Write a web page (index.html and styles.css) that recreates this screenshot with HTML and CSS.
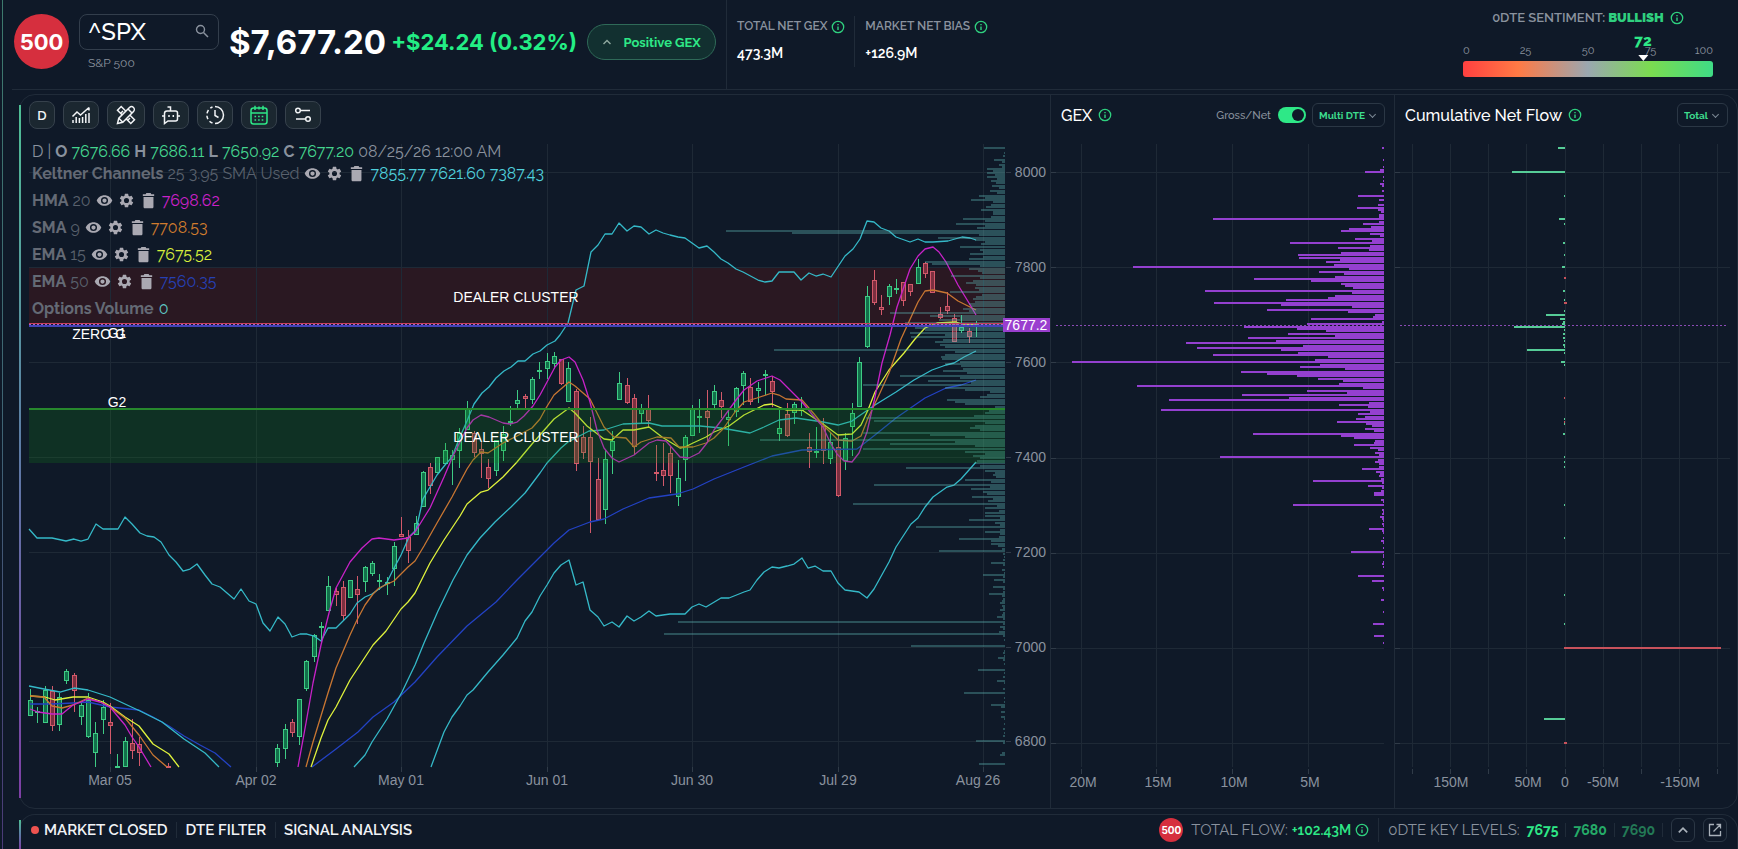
FILE: index.html
```html
<!DOCTYPE html>
<html lang="en">
<head>
  <meta charset="UTF-8">
  <meta name="viewport" content="width=device-width, initial-scale=1.0">
  <title>^SPX - S&amp;P 500</title>
  <link rel="stylesheet" href="styles.css">
</head>
<body>
  <svg class="sprite" width="0" height="0" aria-hidden="true">
    <symbol id="info" viewBox="0 0 14 14">
      <circle cx="7" cy="7" r="5.7" fill="none" stroke="currentColor" stroke-width="1.3"/>
      <path d="M7 6.4v3.5M7 4v1.3" fill="none" stroke="currentColor" stroke-width="1.4"/>
    </symbol>
    <symbol id="up" viewBox="0 0 10 10"><path d="M1.5 7 5 3.5 8.5 7" fill="none" stroke="currentColor" stroke-width="1.4"/></symbol>
    <symbol id="eye" viewBox="0 0 24 24"><path fill="currentColor" fill-rule="evenodd" d="M12 4.500C7 4.500 2.700 7.600 1 12c1.700 4.400 6 7.500 11 7.500s9.300-3.100 11-7.500c-1.700-4.400-6-7.500-11-7.500zM12 17a5 5 0 1 1 0-10 5 5 0 0 1 0 10zm0-8a3 3 0 1 0 0 6 3 3 0 0 0 0-6z"/></symbol>
    <symbol id="gear" viewBox="0 0 24 24"><path fill="currentColor" fill-rule="evenodd" d="M19.140 12.940c.04-.3.06-.61.06-.94s-.02-.64-.07-.94l2.030-1.580a.5.5 0 0 0 .12-.61l-1.920-3.320a.5.5 0 0 0-.59-.22l-2.390.96a7 7 0 0 0-1.620-.94L14.400 2.810a.5.500 0 0 0-.48-.41h-3.840a.5.5 0 0 0-.47.41L9.250 5.350c-.59.24-1.130.57-1.620.94l-2.390-.96a.5.5 0 0 0-.59.22L2.740 8.870a.5.5 0 0 0 .12.61l2.030 1.580c-.05.3-.09.63-.09.94s.02.64.07.94l-2.030 1.580a.5.5 0 0 0-.12.61l1.920 3.320c.12.22.37.29.59.22l2.390-.96c.5.38 1.030.7 1.620.94l.36 2.540c.05.24.24.41.48.41h3.840c.24 0 .44-.17.47-.41l.36-2.540c.59-.24 1.130-.56 1.620-.94l2.390.96c.22.08.47 0 .59-.22l1.920-3.320a.5.5 0 0 0-.12-.61zM12 15.600a3.600 3.600 0 1 1 0-7.200 3.600 3.600 0 0 1 0 7.200z"/></symbol>
    <symbol id="trash" viewBox="0 0 24 24"><path fill="currentColor" d="M5 21c0 1.100.9 2 2 2h10c1.100 0 2-.9 2-2V7H5zM20 3h-4l-1-1.500H9L8 3H4v2.500h16z"/></symbol>
  </svg>

  <header class="top">
    <div class="logo">500</div>
    <div class="symbol">
      <div class="search">
        <input type="text" value="^SPX" aria-label="Symbol">
        <svg width="14" height="14" viewBox="0 0 14 14"><circle cx="5.500" cy="5.500" r="4" fill="none" stroke="currentColor" stroke-width="1.400"/><path d="M8.500 8.500 13 13" stroke="currentColor" stroke-width="1.500"/></svg>
      </div>
      <p>S&amp;P 500</p>
    </div>
    <div class="price">$7,677.20</div>
    <div class="change">+$24.24 (0.32%)</div>
    <button class="pill"><svg width="10" height="10"><use href="#up"/></svg>Positive GEX</button>
    <div class="stats">
      <div class="stat">
        <h2>TOTAL NET GEX <svg class="info"><use href="#info"/></svg></h2>
        <p>473.3M</p>
      </div>
      <div class="stat">
        <h2>MARKET NET BIAS <svg class="info"><use href="#info"/></svg></h2>
        <p>+126.9M</p>
      </div>
    </div>
    <div class="sentiment">
      <h2>0DTE SENTIMENT: <b>BULLISH</b> <svg class="info"><use href="#info"/></svg></h2>
      <div class="gauge">
        <div class="scale"><span>0</span><span>25</span><span>50</span><span>75</span><span>100</span></div>
        <div class="bar"></div>
        <div class="needle" style="left: 72%">72</div>
      </div>
    </div>
  </header>

  <main class="panels">
    <section class="panel chart">
      <div class="toolbar">
        <button class="interval">D</button>
        <button aria-label="Indicators">
          <svg width="20" height="20" viewBox="0 0 20 20"><path d="M1.500 11.500 6 7l3.500 3L18 2.500M18 2.500v3M2 18v-3M5.200 18v-6M8.400 18v-5M11.600 18v-6M14.800 18V9M18 18V8"/></svg>
        </button>
        <button class="wide" aria-label="Drawing tools">
          <svg width="20" height="20" viewBox="0 0 20 20"><path d="M5.200 1.500 1.500 5.200l13.300 13.300 3.700-3.700zM5 8l2-2M8.500 11.500l1.500-1.500M12 15l2-2"/><path class="cover" d="M13.500 2.500 2.800 13.200 1.500 18.500l5.300-1.300L17.500 6.500a2.800 2.800 0 0 0-4-4z"/><path d="M12 4l4 4M2.800 13.200l4 4"/></svg>
        </button>
        <button aria-label="Assistant">
          <svg width="20" height="20" viewBox="0 0 20 20"><path d="M9.500 6V2H6.500M6 6h8.500a2 2 0 0 1 2 2v6a2 2 0 0 1-2 2H7l-3.500 2.500V8.500A2.500 2.500 0 0 1 6 6zM1 11h2.500M16.500 11H19M8 10v2M12.300 10v2"/></svg>
        </button>
        <button aria-label="History">
          <svg width="20" height="20" viewBox="0 0 20 20"><path d="M10 1.500a8.500 8.500 0 0 1 0 17M10 5v5.500l3.500 2"/><path stroke-dasharray="3.500 2.500" d="M7.500 18A8.500 8.500 0 0 1 7.500 2"/></svg>
        </button>
        <button class="on" aria-label="Calendar">
          <svg width="20" height="20" viewBox="0 0 20 20"><rect x="2" y="3" width="16" height="16" rx="2.500"/><path d="M2 8h16M6 .8V5M14 .8V5M10 1.500v3"/><path stroke-dasharray="1.600 2" d="M5.500 11.500h10M5.500 15h10"/></svg>
        </button>
        <button aria-label="Settings">
          <svg width="18" height="18" viewBox="0 0 18 18"><circle cx="4" cy="4.500" r="2.300"/><circle cx="14" cy="13" r="2.300"/><path d="M6.500 4.500H16M2 13h9.500"/></svg>
        </button>
      </div>
      <div class="plot">
        <svg id="price" viewBox="20 141 1030 667"></svg>
        <div class="legend">
          <p class="ohlc">D | <b>O</b> <i>7676.66</i> <b>H</b> <i>7686.11</i> <b>L</b> <i>7650.92</i> <b>C</b> <i>7677.20</i> 08/25/26 12:00 AM</p>
          <p class="row"><b>Keltner Channels</b> 25 3.95 SMA Used <svg><use href="#eye"/></svg><svg><use href="#gear"/></svg><svg><use href="#trash"/></svg><span class="cyan">7855.77 7621.60 7387.43</span></p>
          <p class="row"><b>HMA</b> 20 <svg><use href="#eye"/></svg><svg><use href="#gear"/></svg><svg><use href="#trash"/></svg><span class="magenta">7698.62</span></p>
          <p class="row"><b>SMA</b> 9 <svg><use href="#eye"/></svg><svg><use href="#gear"/></svg><svg><use href="#trash"/></svg><span class="orange">7708.53</span></p>
          <p class="row"><b>EMA</b> 15 <svg><use href="#eye"/></svg><svg><use href="#gear"/></svg><svg><use href="#trash"/></svg><span class="yellow">7675.52</span></p>
          <p class="row"><b>EMA</b> 50 <svg><use href="#eye"/></svg><svg><use href="#gear"/></svg><svg><use href="#trash"/></svg><span class="blue">7560.35</span></p>
          <p class="row"><b>Options Volume</b> <span class="teal">0</span></p>
        </div>
      </div>
    </section>

    <section class="panel">
      <div class="head">
        <h3>GEX</h3><svg class="info"><use href="#info"/></svg>
        <label class="switch">Gross/Net <input type="checkbox" checked></label>
        <div class="select"><select aria-label="Expiry"><option>Multi DTE</option></select></div>
      </div>
      <svg id="gex" viewBox="1051 141 343 667"></svg>
    </section>

    <section class="panel">
      <div class="head">
        <h3>Cumulative Net Flow</h3><svg class="info"><use href="#info"/></svg>
        <div class="select last"><select aria-label="Flow type"><option>Total</option></select></div>
      </div>
      <svg id="flow" viewBox="1395 141 342 667"></svg>
    </section>
  </main>

  <footer>
    <nav>
      <a href="#" class="closed">MARKET CLOSED</a>
      <a href="#">DTE FILTER</a>
      <a href="#">SIGNAL ANALYSIS</a>
    </nav>
    <div class="flow">
      <span class="logo small">500</span>
      TOTAL FLOW: <b>+102.43M</b>
      <svg class="info"><use href="#info"/></svg>
    </div>
    <div class="levels">
      0DTE KEY LEVELS: <b>7675</b><b>7680</b><b>7690</b>
    </div>
    <button aria-label="Expand"><svg width="12" height="12"><use href="#up"/></svg></button>
    <button aria-label="Open in new window"><svg width="14" height="14" viewBox="0 0 14 14" fill="none" stroke="currentColor" stroke-width="1.300"><path d="M6 1.500H1.500v11h11V8M8.500 1.500h4v4M12.500 1.500 5.500 8.500"/></svg></button>
  </footer>

  <script src="chart.js"></script>
</body>
</html>
```
FILE: styles.css
```css
* {
  margin: 0;
  padding: 0;
  box-sizing: border-box;
}

html, body {
  height: 100%;
}

body {
  display: flex;
  flex-direction: column;
  position: relative;
  overflow: hidden;
  background-color: #0f1928;
  color: #8a929e;
  font-family: Raleway, Lato, sans-serif;
}

body::before {
  content: '';
  position: absolute;
  top: 0;
  bottom: 0;
  left: 2px;
  width: 1px;
  background: linear-gradient(#3d7a6d, #3f6474 50%, #4b3a78);
}

button, input, select {
  font-family: inherit;
  color: inherit;
  background: none;
  border: none;
  outline: none;
}

button {
  display: flex;
  align-items: center;
  justify-content: center;
  cursor: pointer;
}

svg {
  flex: none;
}

.sprite {
  position: absolute;
}

.info {
  width: 14px;
  height: 14px;
  color: #2fd07f;
}

.top {
  display: flex;
  align-items: flex-start;
  height: 90px;
  margin-left: 12px;
  border-bottom: 1px solid #202b39;
}

.logo {
  display: flex;
  align-items: center;
  justify-content: center;
  width: 55px;
  height: 55px;
  margin: 14px 10px 0 2px;
  border-radius: 50%;
  background-color: #d62f3e;
  color: #fff;
  font-family: Inter, sans-serif;
  font-size: 22px;
  font-weight: 700;
}

.symbol {
  width: 140px;
  margin: 14px 10px 0 0;
}

.search {
  display: flex;
  align-items: center;
  height: 36px;
  padding: 0 9px 2px 8px;
  border: 1px solid #333e4c;
  border-radius: 8px;
}

.search input {
  flex: 1;
  width: 50px;
  color: #fff;
  font-size: 24px;
  font-weight: 500;
}

.symbol p {
  padding-left: 9px;
  font-size: 12px;
  line-height: 26px;
}

.price {
  color: #fff;
  font-family: Inter, sans-serif;
  font-size: 33px;
  font-weight: 700;
  line-height: 84px;
}

.change {
  margin-left: 5px;
  color: #23ee85;
  font-family: Inter, sans-serif;
  font-size: 22px;
  font-weight: 700;
  line-height: 84px;
}

.pill {
  width: 129px;
  height: 36px;
  margin: 24px 10px 0;
  gap: 11px;
  border: 1px solid #2f6a58;
  border-radius: 18px;
  background-color: #123030;
  color: #2ee887;
  font-size: 13px;
  font-weight: 700;
}

.pill svg {
  color: #8fa89f;
}

.stats {
  display: flex;
  height: 89px;
  padding: 16px 0 22px;
  border-left: 1px solid #202b39;
}

.stat {
  padding: 0 9px 0 10px;
}

.stat + .stat {
  border-left: 1px solid #202b39;
}

.stat h2 {
  display: flex;
  align-items: center;
  gap: 4px;
  font-size: 12px;
  font-weight: 600;
  line-height: 21px;
}

.stat p {
  margin-top: 5px;
  color: #fff;
  font-size: 14px;
  font-weight: 600;
  line-height: 22px;
}

.sentiment {
  width: 250px;
  margin: 8px 25px 0 auto;
}

.sentiment h2 {
  display: flex;
  align-items: center;
  justify-content: center;
  gap: 3px;
  font-size: 13px;
  font-weight: 600;
  line-height: 20px;
}

.sentiment b {
  color: #2fd07f;
}

.sentiment .info {
  margin-left: 3px;
}

.gauge {
  position: relative;
}

.scale {
  display: flex;
  justify-content: space-between;
  padding: 13px 0 1px;
  font-size: 11px;
  line-height: 19px;
}

.scale span {
  display: flex;
  justify-content: center;
  width: 0;
}

.scale span:first-child {
  justify-content: flex-start;
}

.scale span:last-child {
  justify-content: flex-end;
}

.bar {
  height: 16px;
  border-radius: 3px;
  background: linear-gradient(90deg, #ff4040, #ff7a45 22%, #9aa7b0 50%, #7bdc50 75%, #3fdc86);
}

.needle {
  position: absolute;
  top: 4px;
  transform: translateX(-50%);
  color: #2ee887;
  font-size: 15px;
  font-weight: 800;
  line-height: 18px;
}

.needle::after {
  content: '';
  position: absolute;
  top: 23px;
  left: 50%;
  margin-left: -5px;
  border: 5px solid transparent;
  border-top: 6px solid #fff;
  border-bottom: none;
}

.panels {
  display: grid;
  grid-template-columns: 1030fr 344fr 343fr;
  position: relative;
  margin: 4px 0 5px 19px;
  border: 1px solid #202b39;
  border-radius: 16px;
}

.panels::before, footer::before {
  content: '';
  position: absolute;
  top: 10px;
  bottom: 10px;
  left: -1px;
  width: 2px;
  background: linear-gradient(#4fbf95, #5d7ba6 50%, #7e3fa5);
}

.panel + .panel {
  border-left: 1px solid #202b39;
}

.panel > svg, .plot > svg {
  display: block;
  width: 100%;
}

.toolbar {
  display: flex;
  gap: 8px;
  height: 46px;
  padding: 6px 9px;
}

.toolbar button {
  width: 36px;
  height: 28px;
  border: 1px solid #36414c;
  border-radius: 8px;
  background-color: #1b2730;
  color: #f2f4f6;
}

.toolbar .interval {
  width: 26px;
  font-size: 13px;
  font-weight: 600;
}

.toolbar .wide {
  width: 38px;
}

.toolbar .on {
  color: #2ee887;
}

.toolbar svg {
  fill: none;
  stroke: currentColor;
  stroke-width: 1.5px;
}

.toolbar .cover {
  fill: #1b2730;
}

.plot {
  position: relative;
}

.legend {
  position: absolute;
  top: 0;
  left: 12px;
  font-size: 16px;
  white-space: nowrap;
}

.ohlc {
  padding-top: 2px;
  line-height: 17px;
}

.ohlc i {
  color: #45d58f;
  font-style: normal;
}

.row {
  display: flex;
  align-items: center;
  gap: 4px;
  height: 27px;
  color: #59616d;
}

.row b {
  color: #646a75;
}

.row svg {
  width: 17px;
  height: 17px;
  margin-left: 1px;
  color: #aaa9b2;
}

.row span {
  margin-left: 1px;
}

.cyan { color: #4fd0dc; }
.magenta { color: #cb21c9; }
.orange { color: #d07c2e; }
.yellow { color: #d8ef3c; }
.blue { color: #2640b4; }
.teal { color: #5ec6c2; }

.head {
  display: flex;
  align-items: center;
  height: 46px;
  padding: 0 9px 6px 10px;
  gap: 6px;
}

.head h3 {
  color: #fff;
  font-size: 16px;
  font-weight: 500;
}

.switch {
  display: flex;
  align-items: center;
  gap: 7px;
  margin-left: auto;
  font-size: 11px;
  font-weight: 500;
}

.switch input {
  appearance: none;
  position: relative;
  width: 28px;
  height: 16px;
  border-radius: 8px;
  background-color: #2ee887;
  cursor: pointer;
}

.switch input::after {
  content: '';
  position: absolute;
  top: 2px;
  right: 2px;
  width: 12px;
  height: 12px;
  border-radius: 50%;
  background-color: #0f1928;
}

.select {
  position: relative;
  width: 73px;
}

.select::after {
  content: '';
  position: absolute;
  top: 9px;
  right: 10px;
  width: 4px;
  height: 4px;
  border: solid #7c8894;
  border-width: 0 1px 1px 0;
  transform: rotate(45deg);
  pointer-events: none;
}

.select select {
  appearance: none;
  display: block;
  width: 100%;
  height: 24px;
  padding: 0 6px;
  border: 1px solid #2b3745;
  border-radius: 6px;
  color: #3ddc8d;
  font-size: 10px;
  font-weight: 700;
}

.select.last {
  width: 51px;
  margin-left: auto;
}

footer {
  display: flex;
  align-items: flex-start;
  flex: 1;
  position: relative;
  min-height: 35px;
  margin-left: 19px;
  padding: 3px 10px 0 11px;
  border: 1px solid #202b39;
  border-bottom: none;
  border-radius: 16px 16px 0 0;
  font-size: 15px;
  line-height: 22px;
}

footer::before {
  top: 5px;
  bottom: 0;
}

nav, .flow, .levels {
  display: flex;
  align-items: center;
  height: 24px;
}

nav a {
  padding: 0 9px 0 8px;
  border-left: 1px solid #202b39;
  color: #f1f3f6;
  font-weight: 600;
  line-height: 16px;
  text-decoration: none;
}

nav .closed {
  display: flex;
  align-items: center;
  gap: 5px;
  padding-left: 0;
  border: none;
}

.closed::before {
  content: '';
  width: 8px;
  height: 8px;
  border-radius: 50%;
  background-color: #ef5350;
}

.flow {
  gap: 4px;
  margin-left: auto;
}

.logo.small {
  width: 24px;
  height: 24px;
  margin: 0 4px 0 0;
  font-size: 10px;
}

.flow b {
  color: #2ee887;
  font-size: 14px;
  font-weight: 600;
}

.levels {
  margin-left: 9px;
  padding-left: 9px;
  border-left: 1px solid #202b39;
}

.levels b {
  padding: 0 7px;
  border-right: 1px solid #202b39;
  color: #2ee887;
  font-size: 14px;
  line-height: 14px;
}

.levels b + b {
  color: #25ab68;
}

.levels b + b + b {
  color: #237a56;
}

footer button {
  width: 24px;
  height: 24px;
  margin-left: 8px;
  border: 1px solid #2b3745;
  border-radius: 6px;
  color: #a9b1ba;
}

/* charts */
.grid { stroke: #1e2936; }
.tick { stroke: #303b48; }
.axis { fill: #8a929e; }
.note { fill: #fff; }
.axis, .note, .tag-text {
  font-family: "Liberation Sans", Arial, sans-serif;
  font-size: 14px;
}
.tag { fill: #9a3fcf; }
.tag-text { fill: #fff; }
.bars-vol { fill: #5fb3b3; fill-opacity: .36; }
.bars-gex { fill: #9440d0; }
.bars-up { fill: #56cc97; }
.bars-down { fill: #c8525c; }
.zone-red { fill: #2a1822; }
.zone-green { fill: #109016; fill-opacity: .2; }
.line { fill: none; stroke-width: 1.3px; stroke-linejoin: round; }
.up { fill: #12704b; stroke: #3ecb84; }
.down { fill: #7c2f40; stroke: #d2596a; }
```
FILE: chart.js
```js
const NS = 'http://www.w3.org/2000/svg'

function add(svg, tag, attrs, text) {
  const el = document.createElementNS(NS, tag)
  for (const key in attrs) el.setAttribute(key, attrs[key])
  if (text !== undefined) el.textContent = text
  svg.appendChild(el)
  return el
}

function line(svg, x1, y1, x2, y2, attrs) {
  add(svg, 'line', { x1, y1, x2, y2, 'shape-rendering': 'crispEdges', ...attrs })
}

function label(svg, x, y, text, cls = 'axis', anchor = 'middle') {
  add(svg, 'text', { x, y, class: cls, 'text-anchor': anchor }, text)
}

// list is "y:length" pairs, dir -1 grows to the left of x
function bars(svg, x, list, dir, cls) {
  list.trim().split(/\s+/).forEach(item => {
    const [y, len] = item.split(':').map(Number)
    add(svg, 'rect', { x: dir < 0 ? x - len : x, y: y - 1, width: len, height: 2, class: cls, 'shape-rendering': 'crispEdges' })
  })
}

function curve(svg, points, color) {
  add(svg, 'polyline', { points, class: 'line', stroke: color })
}

const LEVELS = [8000, 7800, 7600, 7400, 7200, 7000, 6800]

/* price chart */
const price = document.getElementById('price')
const months = [[110, 'Mar 05'], [256, 'Apr 02'], [401, 'May 01'], [547, 'Jun 01'], [692, 'Jun 30'], [838, 'Jul 29'], [983, 'Aug 26']]

add(price, 'rect', { x: 29, y: 267, width: 976, height: 56, class: 'zone-red' })

months.forEach(([x, text]) => {
  line(price, x, 144, x, 767, { class: 'grid' })
  line(price, x, 767, x, 772, { class: 'tick' })
  label(price, Math.min(x, 978), 785, text)
})
LEVELS.forEach((level, i) => {
  const y = Math.round(172 + i * 94.9)
  line(price, 29, y, 1005, y, { class: 'grid' })
  line(price, 1006, y, 1011, y, { class: 'tick' })
  label(price, 1046, y + 5, level, 'axis', 'end')
})

// i, body top, body bottom, high, low, up
const candles = [
  [0,700,716,689,716,1],[1,711,713,707,723,1],[2,690,723,686,723,1],[3,691,726,686,731,0],[4,697,725,693,731,1],
  [5,671,681,669,684,1],[6,675,691,673,712,0],[7,705,717,703,725,1],[8,700,737,693,738,1],[9,733,753,722,767,1],
  [10,707,720,700,734,1],[11,722,726,703,754,0],[12,766,767,754,767,1],[13,741,767,737,767,1],[14,743,751,719,759,0],
  [15,744,753,737,766,0],[19,766,767,763,767,0],
  [34,748,763,744,767,1],[35,729,749,724,759,1],[36,722,733,719,737,0],[37,699,737,699,745,1],[38,661,689,660,691,1],
  [39,635,657,634,662,1],[40,626,628,622,642,1],[41,586,611,576,611,1],[42,591,595,588,606,0],[43,587,616,581,621,0],
  [44,580,598,580,598,1],[45,589,595,576,624,0],[46,567,582,566,592,1],[47,563,574,561,576,1],[48,580,582,574,590,1],
  [49,582,584,577,595,1],[50,546,569,542,586,1],[51,534,537,517,537,0],[52,537,551,530,563,0],[53,523,535,516,535,1],
  [54,472,507,471,507,1],[55,467,486,463,494,0],[56,457,473,457,473,1],[57,450,464,443,464,1],[58,455,460,450,485,1],
  [59,433,451,428,468,1],[60,409,430,401,430,1],[61,433,453,431,457,0],[62,449,454,442,478,0],[63,467,479,459,488,0],
  [64,440,471,440,476,1],[65,434,451,426,461,1],[66,421,423,406,426,1],[67,400,404,390,408,1],[68,396,399,394,408,0],
  [69,379,400,377,404,1],[70,370,371,362,379,1],[71,361,369,353,379,1],[72,356,364,352,369,1],[73,359,384,359,385,0],
  [74,368,402,362,402,1],[75,391,464,389,471,0],[76,437,453,426,459,0],[77,437,462,417,533,0],[78,479,520,458,520,0],
  [79,459,510,450,524,1],[80,441,451,431,474,1],[81,383,400,372,400,1],[82,385,403,378,404,0],[83,398,447,394,455,0],
  [84,409,414,404,424,1],[85,408,421,395,428,0],[86,472,473,445,481,0],[87,470,476,443,486,0],[88,453,476,447,493,0],
  [89,478,497,460,506,1],[90,437,460,435,481,1],[91,409,436,405,436,1],[92,416,418,399,433,1],[93,411,418,390,443,0],
  [94,391,405,385,408,1],[95,400,407,392,418,0],[96,417,420,410,446,1],[97,388,412,387,417,1],[98,373,386,371,405,1],
  [99,387,402,378,405,0],[100,388,391,382,403,1],[101,374,375,370,395,1],[102,381,392,376,407,0],[103,428,434,409,441,1],
  [104,414,436,403,437,0],[105,404,413,402,424,1],[106,409,410,397,416,1],[107,447,452,433,468,0],[108,451,453,427,458,1],
  [109,426,451,418,464,0],[110,442,459,433,464,1],[111,447,496,434,497,0],[112,438,461,433,470,1],[113,413,427,403,456,1],
  [114,362,407,357,407,1],[115,296,347,286,348,1],[116,280,303,270,305,0],[117,307,310,295,315,0],[118,286,297,284,305,1],
  [119,288,290,279,294,1],[120,282,301,282,306,0],[121,284,292,284,296,0],[122,267,284,259,284,1],[123,263,274,262,278,0],
  [124,271,293,271,293,0],[125,314,318,307,319,0],[126,306,311,292,314,0],[127,318,342,314,342,0],[128,327,331,315,333,1],
  [129,331,337,328,343,0],[130,325,326,321,337,1]
]
candles.forEach(([i, top, bottom, high, low, up]) => {
  const x = Math.round(30 + i * 7.276)
  const cls = up ? 'up' : 'down'
  line(price, x + .5, high, x + .5, low, { class: cls })
  add(price, 'rect', { x: x - 1.5, y: top + .5, width: 4, height: Math.max(bottom - top - 1, 1), class: cls })
})

curve(price, '30,704 52,704 73,703 88,702 110,707 139,710 153,717 169,726 184,736 200,745 215,753 231,767', '#2342c4')
curve(price, '312,767 336,749 358,732 373,717 394,702 415,682 437,657 467,626 496,602 517,580 540,557 554,543 569,530 590,522 604,519 623,509 649,498 677,494 693,489 714,479 744,467 772,456 802,450 857,449 875,435 896,418 925,398 946,388 961,385 976,380', '#2342c4')
curve(price, '29,529 37,538 52,538 66,541 74,539 81,541 88,539 96,524 103,529 118,529 125,517 132,524 140,533 147,536 154,537 161,542 169,555 176,562 183,571 190,569 197,564 205,575 212,584 220,587 227,593 234,599 241,589 249,601 256,604 263,623 270,631 278,617 285,624 292,637 300,634 307,634 314,636 321,641 328,628 336,628 343,621 350,614 357,603 365,597 372,594 379,589 386,584 393,570 401,555 409,537 416,530 423,499 430,487 437,475 445,465 452,457 459,439 467,421 474,404 482,393 489,387 496,378 504,371 511,367 518,361 525,361 533,354 540,351 547,345 555,341 560,335 568,323 576,290 584,286 591,252 598,245 605,234 612,234 619,223 627,231 634,226 641,227 649,234 656,230 663,233 670,235 678,237 685,238 692,243 699,248 707,246 714,252 721,259 728,263 736,269 743,272 758,280 765,282 772,281 779,272 794,272 801,280 809,273 816,276 823,274 831,277 845,256 853,249 860,239 867,221 874,222 881,228 889,231 896,237 910,242 918,239 925,242 933,242 948,241 962,237 970,238 976,240', '#35b9c8')
curve(price, '29,686 44,689 60,692 74,688 88,690 110,697 140,711 162,722 184,739 205,753 219,767', '#35b9c8')
curve(price, '354,767 365,755 372,742 387,719 402,692 415,665 424,643 438,611 453,580 467,555 480,538 495,522 511,507 525,493 540,473 547,463 561,448 568,442 589,431 604,430 623,424 649,423 662,426 700,426 721,428 750,433 764,427 779,420 796,418 823,422 838,425 852,421 859,416 875,405 896,392 914,380 932,370 946,365 954,363 964,357 976,351', '#35b9c8')
curve(price, '431,767 444,732 452,717 460,706 467,695 473,690 488,672 503,655 517,638 525,621 532,612 540,596 547,585 554,573 561,565 569,560 576,585 583,582 590,610 598,617 604,626 612,622 619,627 627,616 634,621 641,617 649,611 656,616 670,614 685,614 692,607 699,604 706,607 721,598 729,598 744,592 750,590 757,580 764,572 772,567 779,568 787,566 794,564 802,558 808,568 815,566 823,571 831,571 838,583 845,590 859,592 867,598 874,589 889,562 896,547 911,524 918,518 925,507 933,497 947,487 954,485 961,479 969,470 976,462', '#35b9c8')
curve(price, '30,696 45,697 55,700 73,697 88,697 103,702 110,706 125,717 139,726 153,744 169,754 179,767', '#dff23c')
curve(price, '311,767 321,738 328,720 336,707 350,680 373,645 386,631 401,609 408,602 415,593 430,563 444,540 460,516 467,504 481,492 488,490 503,477 517,462 532,444 554,419 569,408 575,413 587,426 604,439 612,440 623,430 634,430 649,427 662,437 680,448 685,447 693,443 706,437 714,432 729,426 744,415 764,405 772,404 786,410 802,410 823,424 838,435 852,434 861,425 868,410 875,392 889,370 904,353 915,339 925,328 937,323 956,322 962,324 976,325', '#dff23c')
curve(price, '30,696 44,697 52,706 62,708 73,705 88,698 103,703 110,707 125,718 139,735 153,755 167,767', '#c87632')
curve(price, '306,767 313,742 328,693 336,668 350,635 357,620 365,605 373,594 379,588 394,581 408,567 415,561 424,546 437,523 452,497 460,482 467,469 473,460 481,452 488,453 503,443 517,436 532,428 540,419 546,408 554,395 569,382 575,386 590,399 604,427 614,437 626,438 634,447 641,442 657,437 671,438 679,447 693,447 706,443 714,438 723,429 735,412 744,402 757,398 772,393 779,395 786,399 802,400 815,415 823,425 838,440 852,441 861,436 868,418 879,395 889,373 901,339 918,302 925,291 933,290 947,293 958,301 976,310', '#c87632')
curve(price, '30,709 38,712 52,714 62,714 73,705 81,702 88,699 100,702 110,707 125,725 132,737 139,747 151,767', '#c822c8')
curve(price, '298,767 306,723 313,683 321,645 329,613 336,588 343,575 350,562 362,548 372,539 379,538 394,540 408,538 415,532 430,508 444,477 452,458 460,442 467,428 473,420 481,415 489,417 503,423 510,424 517,422 524,416 533,406 540,395 547,382 555,367 561,360 569,357 575,362 583,380 590,402 597,430 604,448 612,458 619,462 634,455 649,443 657,440 666,441 673,449 680,457 689,458 699,453 707,443 714,430 723,418 736,400 744,390 757,381 772,376 780,380 787,387 802,402 815,418 823,427 830,442 837,454 844,461 852,462 859,453 867,432 875,397 882,363 890,335 897,307 910,269 918,256 925,249 933,247 939,252 946,262 958,285 969,303 976,315', '#c822c8')

bars(price, 1005, `148:21 153:1 156:2 160:11 162:3 165:6 167:3 169:18 171:12 173:18 175:10 177:18 179:8 181:14 183:9 186:13 188:6 191:15 193:8 196:26 198:20
200:34 202:12 205:14 207:19 210:24 212:12 214:12 217:14 219:42 221:20 224:49 226:20 228:28 231:279 233:213 235:26 238:67 240:30 242:20 244:24
247:45 250:25 252:22 254:35 257:22 259:36 262:80 264:73 266:25 269:36 271:27 273:23 276:54 278:25 281:32 283:39 285:29 288:30 290:26 292:55
295:23 297:29 299:32 302:30 304:36 306:34 309:42 311:36 313:115 316:75 318:45 320:66 323:100 325:70 328:90 330:80 333:95 335:60 337:94 340:62
342:70 345:65 347:60 350:231 352:50 355:60 357:64 359:63 362:45 364:60 366:44 369:42 371:62 373:38 376:105 378:45 381:77 383:34 385:142
388:60 390:40 392:15 395:18 397:25 400:58 402:50 404:40 407:10 409:15 411:16 413:20 416:31 418:139 421:131 423:20 426:30 428:35 430:25 433:142
435:75 437:40 440:245 442:50 444:115 446:30 449:142 452:40 454:20 456:32 458:25 461:28 463:30 466:25 468:99 471:20 473:10 475:12 477:9 480:40
482:14 485:131 487:15 489:34 492:22 494:18 497:33 499:12 501:17 504:152 506:8 508:20 511:6 513:20 516:20 518:5 520:36 523:10 525:5 527:89
530:5 532:20 534:5 537:6 539:46 541:14 544:14 546:7 549:3 551:66 554:2 557:1 560:2 563:14 565:2 570:3 573:1 575:22 577:2 580:11 582:2 587:12
589:2 592:2 594:16 596:3 599:2 601:3 603:5 606:3 608:2 610:5 613:2 615:3 617:8 619:2 622:327 624:2 627:5 629:2 632:6 634:341 636:2 640:1
646:94 651:1 653:2 656:1 658:7 660:2 664:1 670:27 673:1 677:2 681:8 683:1 689:2 693:41 698:1 702:1 705:14 707:4 712:4 717:4 719:1 724:1 729:2
733:1 736:2 741:29 743:2 753:3 755:5 764:26`, -1, 'bars-vol')

add(price, 'rect', { x: 29, y: 409, width: 976, height: 54, class: 'zone-green' })

line(price, 29, 323.5, 1005, 323.5, { stroke: '#c8405a', 'stroke-width': 1 })
line(price, 29, 326, 1005, 326, { stroke: '#4343b8', 'stroke-width': 2 })
line(price, 29, 324.5, 1005, 324.5, { stroke: '#a35fd0', 'stroke-width': 1, 'stroke-dasharray': '2 2' })
line(price, 29, 409, 1005, 409, { stroke: '#27882d', 'stroke-width': 2 })

label(price, 516, 302, 'DEALER CLUSTER', 'note')
label(price, 516, 442, 'DEALER CLUSTER', 'note')
label(price, 99, 339, 'ZERO G', 'note')
label(price, 117, 338, 'G1', 'note')
label(price, 117, 407, 'G2', 'note')

add(price, 'rect', { x: 1003, y: 318, width: 47, height: 14, class: 'tag' })
label(price, 1026, 330, '7677.2', 'tag-text')

/* side charts */
function side(svg, left, right, xs, ticks) {
  xs.forEach(x => {
    line(svg, x, 144, x, 767, { class: 'grid' })
    line(svg, x, 769, x, 774, { class: 'tick' })
  })
  LEVELS.forEach((level, i) => {
    const y = Math.round(172 + i * 95.2)
    line(svg, left + 5, y, right, y, { class: 'grid' })
    line(svg, left, y, left + 5, y, { class: 'tick' })
  })
  ticks.forEach(([x, text]) => label(svg, x, 787, text))
}

const gex = document.getElementById('gex')
side(gex, 1051, 1384, [1081, 1156, 1232, 1308], [[1083, '20M'], [1158, '15M'], [1234, '10M'], [1310, '5M']])
bars(gex, 1384, `148:2 160:1 167:1 170:4 172:19 177:1 181:1 184:4 186:2 191:2 196:26 200:5 205:6 208:27 210:6 212:3 215:5 217:5 219:171
222:5 224:21 227:13 229:35 231:43 234:14 236:4 239:29 241:12 243:94 246:14 248:46 250:15 253:43 255:86 258:85 260:44 262:58 265:50 267:251 269:35
272:65 274:40 277:49 279:130 281:73 284:43 286:39 288:31 291:179 293:32 296:49 298:56 300:98 303:170 305:103 307:32 310:117 312:36 315:9
317:11 319:73 322:2 324:77 327:140 329:87 331:58 334:96 336:49 338:136 341:108 343:198 346:81 348:187 350:103 353:86 355:171 357:56 360:69
362:312 365:64 367:84 369:39 372:143 374:117 376:87 379:66 381:41 384:45 386:247 388:21 391:77 393:37 395:142 398:95 400:215 403:15 405:45
407:16 410:223 412:14 414:26 417:19 419:28 422:47 424:18 426:12 429:19 431:10 434:131 436:43 438:30 441:9 443:10 445:30 448:14 450:6 453:9
455:5 457:164 460:6 462:9 464:5 467:5 469:22 472:8 474:4 476:5 479:3 481:71 483:2 486:16 488:2 491:3 493:10 495:10 500:3 502:1 505:91 510:2
512:1 514:2 517:4 519:2 521:1 524:2 526:1 529:15 531:2 533:1 538:1 541:3 543:1 548:1 552:33 555:1 557:1 562:1 564:2 567:1 576:26 581:12
588:2 590:1 600:3 612:1 624:11 636:10 643:1`, -1, 'bars-gex')
line(gex, 1056, 325, 1384, 325, { stroke: '#8a4bb4', 'stroke-dasharray': '2 2' })

const flow = document.getElementById('flow')
side(flow, 1395, 1730, [1412, 1450, 1488, 1526, 1565, 1603, 1641, 1679, 1717], [[1451, '150M'], [1528, '50M'], [1565, '0'], [1603, '-50M'], [1680, '-150M']])
bars(flow, 1565, `148:7 172:53 196:1 219:6 224:1 243:2 255:1 267:3 291:2 300:1 311:1 315:19 319:5 322:2 324:3 327:51 330:1 334:2 338:2 341:1
345:2 347:1 350:38 353:1 362:4 365:1 419:1 424:1 434:2 457:1 462:1 467:1 505:1 538:1 595:1 624:1 719:21`, -1, 'bars-up')
bars(flow, 1564, '278:2 303:3 398:1 422:1 648:157 743:3', 1, 'bars-down')
line(flow, 1400, 325, 1727, 325, { stroke: '#8a4bb4', 'stroke-dasharray': '2 2' })
```
